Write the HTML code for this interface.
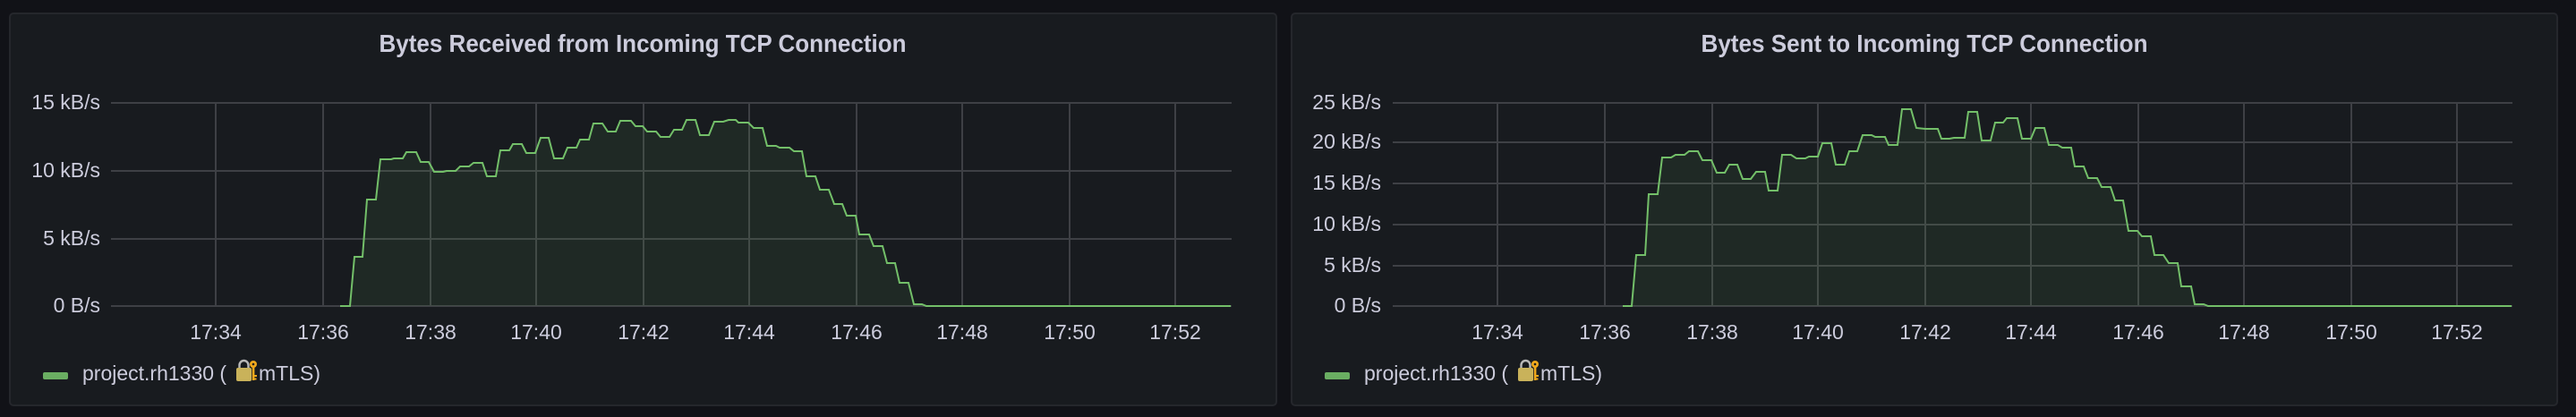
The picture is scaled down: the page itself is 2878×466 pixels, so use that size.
<!DOCTYPE html>
<html><head><meta charset="utf-8"><style>
html,body{margin:0;padding:0;background:#111217;width:2878px;height:466px;overflow:hidden}
svg{display:block}
text{font-family:"Liberation Sans",sans-serif;fill:#ccccdc}
</style></head><body>
<svg width="2878" height="466" viewBox="0 0 2878 466" xmlns="http://www.w3.org/2000/svg">
<defs>
<g id="lock">
<path d="M3.5 10 V6 a5 5 0 0 1 10 0 V10" fill="none" stroke="#b8b8b8" stroke-width="2.4"/>
<rect x="0" y="9" width="17" height="15" rx="2" fill="#c9b25a"/>
<circle cx="19" cy="5" r="4" fill="#f0a81c"/>
<circle cx="19" cy="5" r="1.3" fill="#181b1f"/>
<rect x="17.8" y="8" width="2.6" height="15" fill="#f0a81c"/>
<rect x="20" y="17" width="3" height="2" fill="#f0a81c"/>
<rect x="20" y="20.5" width="2.5" height="2" fill="#f0a81c"/>
</g>
</defs>
<!-- Panel 1 -->
<rect x="11" y="15" width="1415" height="438" rx="4" fill="#181b1f" stroke="#25272c" stroke-width="2"/>
<text x="718" y="58" font-size="28" font-weight="bold" text-anchor="middle" textLength="589" lengthAdjust="spacingAndGlyphs">Bytes Received from Incoming TCP Connection</text>
<g stroke="#3e4045" stroke-width="2">
<line x1="124" y1="115" x2="1376" y2="115"/><line x1="124" y1="191" x2="1376" y2="191"/>
<line x1="124" y1="267" x2="1376" y2="267"/><line x1="124" y1="342" x2="1376" y2="342"/>
<line x1="241" y1="115" x2="241" y2="342"/><line x1="361" y1="115" x2="361" y2="342"/>
<line x1="481" y1="115" x2="481" y2="342"/><line x1="599" y1="115" x2="599" y2="342"/>
<line x1="719" y1="115" x2="719" y2="342"/><line x1="837" y1="115" x2="837" y2="342"/>
<line x1="957" y1="115" x2="957" y2="342"/><line x1="1075" y1="115" x2="1075" y2="342"/>
<line x1="1195" y1="115" x2="1195" y2="342"/><line x1="1313" y1="115" x2="1313" y2="342"/>
</g>
<g font-size="23" text-anchor="end">
<text x="112" y="122">15 kB/s</text><text x="112" y="198">10 kB/s</text>
<text x="112" y="274">5 kB/s</text><text x="112" y="349">0 B/s</text>
</g>
<g font-size="23" text-anchor="middle">
<text x="241" y="379">17:34</text><text x="361" y="379">17:36</text><text x="481" y="379">17:38</text>
<text x="599" y="379">17:40</text><text x="719" y="379">17:42</text><text x="837" y="379">17:44</text>
<text x="957" y="379">17:46</text><text x="1075" y="379">17:48</text><text x="1195" y="379">17:50</text>
<text x="1313" y="379">17:52</text>
</g>
<polygon fill="rgba(115,191,105,0.09)" points="380,342 391,342 396,287 405,287 410,223 420,223 425,178 437,178 440,177 450,177 454,170 465,170 470,181 479,181 485,192 495,192 499,191 509,191 514,186 524,186 529,182 539,182 544,197 554,197 559,168 569,168 573,161 583,161 588,171 598,171 604,154 613,154 619,177 629,177 634,165 644,165 648,156 658,156 663,138 673,138 679,147 688,147 693,135 705,135 710,141 718,141 723,147 733,147 738,153 748,153 753,145 762,145 767,134 777,134 782,151 792,151 798,136 808,136 814,134 822,134 825,137 836,137 842,143 852,143 857,163 867,163 871,165 882,165 887,169 896,169 901,197 911,197 916,212 926,212 932,228 941,228 946,241 956,241 960,262 971,262 976,275 986,275 991,294 1000,294 1005,316 1015,316 1021,340 1030,340 1035,342 1375,342"/>
<polyline fill="none" stroke="#73bf69" stroke-width="2" points="380,342 391,342 396,287 405,287 410,223 420,223 425,178 437,178 440,177 450,177 454,170 465,170 470,181 479,181 485,192 495,192 499,191 509,191 514,186 524,186 529,182 539,182 544,197 554,197 559,168 569,168 573,161 583,161 588,171 598,171 604,154 613,154 619,177 629,177 634,165 644,165 648,156 658,156 663,138 673,138 679,147 688,147 693,135 705,135 710,141 718,141 723,147 733,147 738,153 748,153 753,145 762,145 767,134 777,134 782,151 792,151 798,136 808,136 814,134 822,134 825,137 836,137 842,143 852,143 857,163 867,163 871,165 882,165 887,169 896,169 901,197 911,197 916,212 926,212 932,228 941,228 946,241 956,241 960,262 971,262 976,275 986,275 991,294 1000,294 1005,316 1015,316 1021,340 1030,340 1035,342 1375,342"/>
<rect x="48" y="416" width="28" height="8" rx="2" fill="#73bf69" opacity="0.9"/>
<text x="92" y="425" font-size="23">project.rh1330 (</text>
<use href="#lock" x="264" y="402"/>
<text x="289" y="425" font-size="23">mTLS)</text>

<!-- Panel 2 -->
<rect x="1443" y="15" width="1414" height="438" rx="4" fill="#181b1f" stroke="#25272c" stroke-width="2"/>
<text x="2150" y="58" font-size="28" font-weight="bold" text-anchor="middle" textLength="499" lengthAdjust="spacingAndGlyphs">Bytes Sent to Incoming TCP Connection</text>
<g stroke="#3e4045" stroke-width="2">
<line x1="1556" y1="115" x2="2807" y2="115"/><line x1="1556" y1="159" x2="2807" y2="159"/>
<line x1="1556" y1="205" x2="2807" y2="205"/><line x1="1556" y1="251" x2="2807" y2="251"/>
<line x1="1556" y1="297" x2="2807" y2="297"/><line x1="1556" y1="342" x2="2807" y2="342"/>
<line x1="1673" y1="115" x2="1673" y2="342"/><line x1="1793" y1="115" x2="1793" y2="342"/>
<line x1="1913" y1="115" x2="1913" y2="342"/><line x1="2031" y1="115" x2="2031" y2="342"/>
<line x1="2151" y1="115" x2="2151" y2="342"/><line x1="2269" y1="115" x2="2269" y2="342"/>
<line x1="2389" y1="115" x2="2389" y2="342"/><line x1="2507" y1="115" x2="2507" y2="342"/>
<line x1="2627" y1="115" x2="2627" y2="342"/><line x1="2745" y1="115" x2="2745" y2="342"/>
</g>
<g font-size="23" text-anchor="end">
<text x="1543" y="122">25 kB/s</text><text x="1543" y="166">20 kB/s</text>
<text x="1543" y="212">15 kB/s</text><text x="1543" y="258">10 kB/s</text>
<text x="1543" y="304">5 kB/s</text><text x="1543" y="349">0 B/s</text>
</g>
<g font-size="23" text-anchor="middle">
<text x="1673" y="379">17:34</text><text x="1793" y="379">17:36</text><text x="1913" y="379">17:38</text>
<text x="2031" y="379">17:40</text><text x="2151" y="379">17:42</text><text x="2269" y="379">17:44</text>
<text x="2389" y="379">17:46</text><text x="2507" y="379">17:48</text><text x="2627" y="379">17:50</text>
<text x="2745" y="379">17:52</text>
</g>
<polygon fill="rgba(115,191,105,0.09)" points="1813,342 1823,342 1828,285 1838,285 1842,217 1852,217 1857,176 1867,176 1872,173 1882,173 1887,169 1897,169 1902,179 1912,179 1918,193 1927,193 1932,184 1941,184 1947,200 1956,200 1962,192 1972,192 1976,213 1986,213 1991,173 2001,173 2007,177 2017,177 2021,175 2031,175 2036,160 2046,160 2051,184 2061,184 2066,169 2075,169 2081,151 2091,151 2095,153 2106,153 2110,162 2120,162 2125,122 2135,122 2141,143 2151,144 2165,144 2169,155 2178,155 2183,154 2195,154 2199,125 2209,125 2214,157 2224,157 2229,137 2238,137 2242,132 2254,132 2259,155 2269,155 2274,143 2284,143 2289,162 2299,162 2304,165 2314,165 2318,186 2328,186 2333,199 2343,199 2348,209 2358,209 2363,224 2372,224 2378,258 2388,258 2393,264 2403,264 2407,285 2417,285 2423,294 2433,294 2437,320 2448,320 2452,340 2462,340 2467,342 2806,342"/>
<polyline fill="none" stroke="#73bf69" stroke-width="2" points="1813,342 1823,342 1828,285 1838,285 1842,217 1852,217 1857,176 1867,176 1872,173 1882,173 1887,169 1897,169 1902,179 1912,179 1918,193 1927,193 1932,184 1941,184 1947,200 1956,200 1962,192 1972,192 1976,213 1986,213 1991,173 2001,173 2007,177 2017,177 2021,175 2031,175 2036,160 2046,160 2051,184 2061,184 2066,169 2075,169 2081,151 2091,151 2095,153 2106,153 2110,162 2120,162 2125,122 2135,122 2141,143 2151,144 2165,144 2169,155 2178,155 2183,154 2195,154 2199,125 2209,125 2214,157 2224,157 2229,137 2238,137 2242,132 2254,132 2259,155 2269,155 2274,143 2284,143 2289,162 2299,162 2304,165 2314,165 2318,186 2328,186 2333,199 2343,199 2348,209 2358,209 2363,224 2372,224 2378,258 2388,258 2393,264 2403,264 2407,285 2417,285 2423,294 2433,294 2437,320 2448,320 2452,340 2462,340 2467,342 2806,342"/>
<rect x="1480" y="416" width="28" height="8" rx="2" fill="#73bf69" opacity="0.9"/>
<text x="1524" y="425" font-size="23">project.rh1330 (</text>
<use href="#lock" x="1696" y="402"/>
<text x="1721" y="425" font-size="23">mTLS)</text>
</svg>
</body></html>
